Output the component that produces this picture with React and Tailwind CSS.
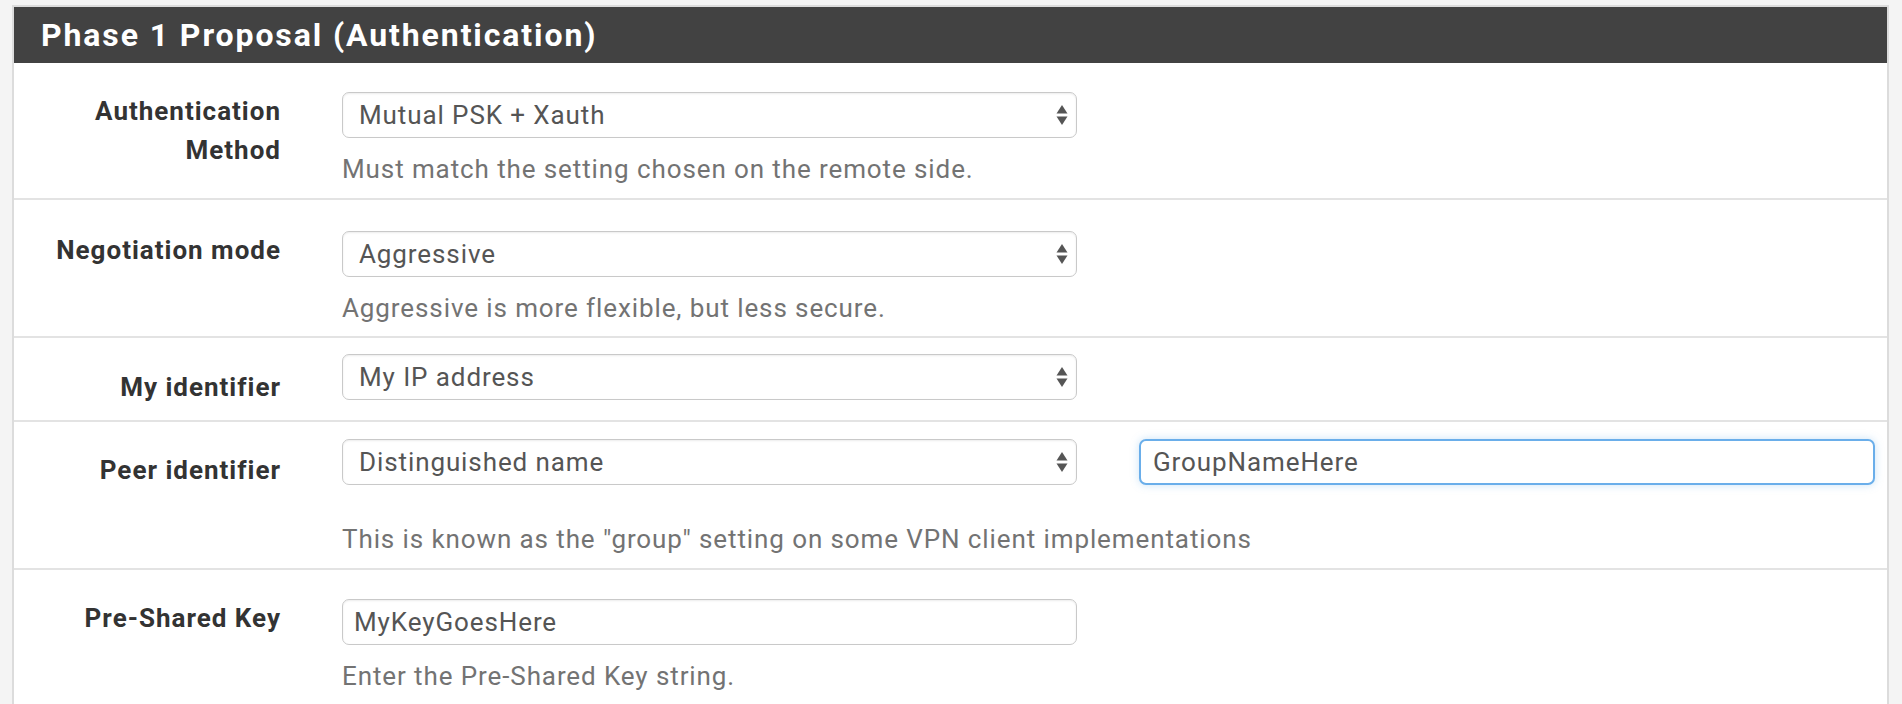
import React from "react";

const font = { fontFamily: "Roboto, 'Liberation Sans', sans-serif" };

function Arrows() {
  return (
    <svg width="12" height="24" viewBox="0 0 12 24" className="shrink-0">
      <path d="M6 2 L11.5 10.5 L0.5 10.5 Z" fill="#555" />
      <path d="M0.5 13.5 L11.5 13.5 L6 22 Z" fill="#555" />
    </svg>
  );
}

function Select({ value }) {
  return (
    <div className="flex items-center justify-between w-[735px] h-[46px] pl-[16px] pr-[8px] bg-white border border-[#c9c9c9] rounded-[7px] shadow-[inset_0_1px_2px_rgba(0,0,0,0.08)] text-[26px] tracking-[0.9px] text-[#555]">
      <span>{value}</span>
      <Arrows />
    </div>
  );
}

function TextInput({ value, focused, className = "" }) {
  return (
    <div
      className={
        "flex items-center h-[46px] bg-white rounded-[7px] text-[26px] tracking-[0.9px] text-[#555] " +
        (focused
          ? "pl-[12px] border-2 border-[#6aaeea] shadow-[0_0_8px_rgba(102,175,233,0.35)] "
          : "pl-[11px] border border-[#c9c9c9] shadow-[inset_0_1px_2px_rgba(0,0,0,0.08)] ") +
        className
      }
    >
      {value}
    </div>
  );
}

function Help({ children, className = "" }) {
  return (
    <div className={"text-[26px] leading-[39px] tracking-[0.9px] text-[#737373] " + className}>
      {children}
    </div>
  );
}

function Row({ label, labelClass = "", rowClass = "", children, last }) {
  return (
    <div className={"flex " + (last ? "" : "border-b-2 border-[#e3e3e3] ") + rowClass}>
      <div className={"w-[267px] shrink-0 text-right font-bold text-[26px] leading-[39px] tracking-[1px] text-[#333] " + labelClass}>
        {label}
      </div>
      <div className="pl-[61px] flex flex-col">{children}</div>
    </div>
  );
}

export default function App() {
  return (
    <div className="w-[1902px] h-[704px] overflow-hidden bg-[#f4f4f4] pt-[5px] pl-[12px]" style={font}>
      <div className="w-[1877px] h-[720px] bg-white border-l-2 border-r-2 border-t-2 border-[#dcdcdc]">
        <div className="h-[56px] bg-[#424242] flex items-center pl-[27px] text-white font-bold text-[32px] tracking-[1.9px]">
          Phase 1 Proposal (Authentication)
        </div>

        <Row label={<>Authentication<br />Method</>} rowClass="h-[137px] pt-[29px]">
          <Select value="Mutual PSK + Xauth" />
          <Help className="mt-[12px]">Must match the setting chosen on the remote side.</Help>
        </Row>

        <Row label="Negotiation mode" rowClass="h-[138px] pt-[31px]">
          <Select value="Aggressive" />
          <Help className="mt-[12px]">Aggressive is more flexible, but less secure.</Help>
        </Row>

        <Row label="My identifier" labelClass="pt-[14px]" rowClass="h-[84px] pt-[16px]">
          <Select value="My IP address" />
        </Row>

        <Row label="Peer identifier" labelClass="pt-[12px]" rowClass="h-[148px] pt-[17px]">
          <div className="flex gap-[62px]">
            <Select value="Distinguished name" />
            <TextInput value="GroupNameHere" focused className="w-[736px]" />
          </div>
          <Help className="mt-[35px]">
            This is known as the "group" setting on some VPN client implementations
          </Help>
        </Row>

        <Row label="Pre-Shared Key" rowClass="pt-[29px]" last>
          <TextInput value="MyKeyGoesHere" className="w-[735px]" />
          <Help className="mt-[12px]">Enter the Pre-Shared Key string.</Help>
        </Row>
      </div>
    </div>
  );
}
